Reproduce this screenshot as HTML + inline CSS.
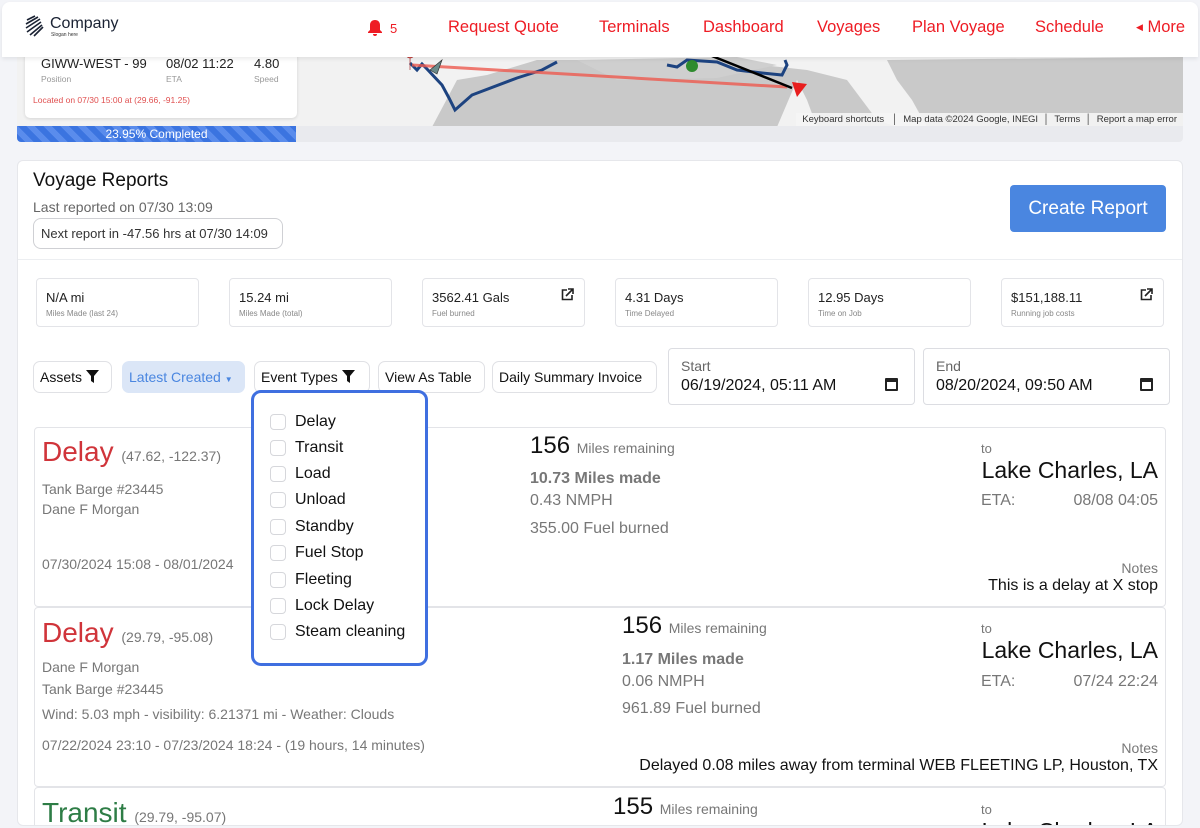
<!DOCTYPE html>
<html style="overflow:hidden"><head><meta charset="utf-8"><style>
*{box-sizing:border-box;margin:0;padding:0}
html,body{width:1200px;height:828px;overflow:hidden}
body{background:#f3f4f8;font-family:"Liberation Sans",Arial,sans-serif;position:relative;color:#222}
.a{position:absolute;white-space:nowrap}
.nav{color:#ee1c24;font-size:16.5px;top:18px}
.stat{position:absolute;top:278px;width:163px;height:49px;border:1px solid #e3e4e8;border-radius:4px;background:#fff}
.stat .v{position:absolute;left:9px;top:11px;font-size:13px;color:#222}
.stat .l{position:absolute;left:9px;top:30px;font-size:8px;color:#888}
.btn{position:absolute;top:361px;height:32px;border:1px solid #e0e1e5;border-radius:7px;background:#fff;font-size:14px;line-height:30px;padding-left:6px;color:#111}
.date{position:absolute;top:348px;height:57px;border:1px solid #dcdde2;border-radius:4px;background:#fff}
.date .l{position:absolute;left:12px;top:9px;font-size:14px;color:#666}
.date .v{position:absolute;left:12px;top:28px;font-size:16px;color:#111}
.cal{position:absolute;right:16px;top:29px;width:13px;height:13px;border:2px solid #222;border-top-width:4px;border-radius:1px}
.row{position:absolute;left:34px;width:1132px;border:1px solid #e3e4e8;border-radius:4px;background:#fff}
.g{color:#777}
.cb{position:absolute;left:270px;width:16px;height:16px;border:1px solid #d6d7db;border-radius:4px;background:#fff}
.it{position:absolute;left:295px;font-size:16px;color:#111}
</style></head><body>

<!-- map -->
<div class="a" style="left:17px;top:40px;width:1166px;height:87px;background:#f2f2f2;overflow:hidden">
<svg width="1166" height="87" viewBox="0 0 1166 87">
<polygon points="415,87 440,40 470,35 520,20 700,20 790,30 830,40 860,80 880,87" fill="#c9c9c9"/>
<polygon points="560,20 720,17 760,25 700,38 600,40" fill="#cfcfcf"/>
<polygon points="870,20 1166,17 1166,87 910,87 895,60 880,40" fill="#c9c9c9"/>
<polygon points="780,40 790,60 800,87 760,87" fill="#f2f2f2"/>
<polyline points="393,23 400,30 405,24 410,29 425,45 432,58 438,70 455,55 500,38 525,30 540,22" fill="none" stroke="#1d4380" stroke-width="3"/>
<polyline points="650,25 660,27 670,20 700,22 720,30 745,33 765,35 770,25 768,20" fill="none" stroke="#1d4380" stroke-width="3"/>
<line x1="395" y1="25" x2="770" y2="47" stroke="#ee5a4f" stroke-width="3" opacity=".8"/>
<line x1="680" y1="10" x2="775" y2="48" stroke="#000" stroke-width="2.5"/>
<circle cx="675" cy="26" r="6" fill="#2e8b2e"/>
<polygon points="775,42 790,44 780,57" fill="#e81e1e"/>
<polygon points="413,30 425,20 420,34" fill="#6a8a8a" stroke="#333" stroke-width=".7"/>
<path d="M393 18a4 4 0 1 1 0.1 0L393 30Z" fill="#e05a4f" stroke="#a33" stroke-width=".7"/>
</svg>
<div class="a" style="right:0;bottom:0;height:14px;background:rgba(245,245,245,.9);font-size:9.5px;line-height:14px;color:#333;padding:0 6px">Keyboard shortcuts &nbsp;&nbsp;│&nbsp; Map data ©2024 Google, INEGI &nbsp;│&nbsp; Terms &nbsp;│&nbsp; Report a map error</div>
</div>
<div class="a" style="left:25px;top:45px;width:272px;height:73px;background:#fff;border-radius:5px;box-shadow:0 1px 3px rgba(0,0,0,.12)">
<div class="a" style="left:16px;top:11px;font-size:13px">GIWW-WEST - 99</div>
<div class="a" style="left:141px;top:11px;font-size:13px">08/02 11:22</div>
<div class="a" style="left:229px;top:11px;font-size:13px">4.80</div>
<div class="a" style="left:16px;top:29px;font-size:8.5px;color:#999">Position</div>
<div class="a" style="left:141px;top:29px;font-size:8.5px;color:#999">ETA</div>
<div class="a" style="left:229px;top:29px;font-size:8.5px;color:#999">Speed</div>
<div class="a" style="left:8px;top:50px;font-size:8.5px;color:#e05050">Located on 07/30 15:00 at (29.66, -91.25)</div>
</div>
<!-- progress -->
<div class="a" style="left:17px;top:126px;width:1166px;height:16px;background:#e9eaee;border-radius:0 0 4px 4px"></div>
<div class="a" style="left:17px;top:126px;width:279px;height:16px;background:repeating-linear-gradient(45deg,#3b74e0 0 6px,#5a8cec 6px 12px);border-radius:0 0 0 4px;color:#fff;font-size:12px;line-height:16px;text-align:center">23.95% Completed</div>

<!-- header -->
<div class="a" style="left:2px;top:2px;width:1196px;height:55px;background:#fff;border-radius:8px 8px 0 0;box-shadow:0 2px 4px rgba(0,0,0,.08)"></div>
<svg class="a" style="left:24px;top:14px" width="22" height="24" viewBox="0 0 22 24"><g fill="none" stroke="#1a2233" stroke-width="1.6"><path d="M3 6l8-4M2 10l12-7M2 14l14-9M3 18l14-10M6 21l12-10M10 22l9-9"/></g></svg>
<div class="a" style="left:50px;top:15px;font-size:16px;color:#1a2233">Company</div>
<div class="a" style="left:51px;top:32px;font-size:5px;color:#333">Slogan here</div>
<svg class="a" style="left:367px;top:19px" width="16" height="17" viewBox="0 0 16 17"><path d="M8 1c3 0 5 2 5 5v5l2 2v1H1v-1l2-2V6c0-3 2-5 5-5zM6 15h4a2 2 0 0 1-4 0z" fill="#ee1c24"/></svg>
<div class="a" style="left:390px;top:21px;font-size:13px;color:#ee1c24">5</div>
<div class="a nav" style="left:448px">Request Quote</div>
<div class="a nav" style="left:599px">Terminals</div>
<div class="a nav" style="left:703px">Dashboard</div>
<div class="a nav" style="left:817px">Voyages</div>
<div class="a nav" style="left:912px">Plan Voyage</div>
<div class="a nav" style="left:1035px">Schedule</div>
<div class="a nav" style="left:1136px"><span style="font-size:9px;position:relative;top:-2px">◀</span>&nbsp;More</div>

<!-- main card -->
<div class="a" style="left:17px;top:160px;width:1166px;height:666px;background:#fff;border:1px solid #e6e7eb;border-radius:6px;overflow:hidden">
<div class="a" style="left:0;top:98px;width:1164px;height:1px;background:#eceef1"></div>
<div class="row" style="left:16px;top:266px;height:180px"></div>
<div class="row" style="left:16px;top:446px;height:180px"></div>
<div class="row" style="left:16px;top:626px;height:60px"></div>
<div class="a" style="left:24px;top:636px;font-size:28px;color:#2e7d46">Transit <span style="font-size:14px;color:#777">(29.79, -95.07)</span></div>
<div class="a" style="left:595px;top:632px;font-size:24px;color:#111">155 <span style="font-size:14px;color:#777">Miles remaining</span></div>
<div class="a g" style="left:963px;top:641px;font-size:13px">to</div>
<div class="a" style="right:24px;top:657px;font-size:23px;color:#111">Lake Charles, LA</div>
</div>
<div class="a" style="left:33px;top:170px;font-size:19px;color:#111">Voyage Reports</div>
<div class="a" style="left:33px;top:199px;font-size:14px;color:#666">Last reported on 07/30 13:09</div>
<div class="a" style="left:33px;top:218px;width:250px;height:31px;border:1px solid #cfd0d4;border-radius:8px;font-size:13px;line-height:29px;padding-left:7px;color:#333">Next report in -47.56 hrs at 07/30 14:09</div>
<div class="a" style="left:1010px;top:185px;width:156px;height:47px;background:#4a86e0;border-radius:4px;color:#fff;font-size:19px;line-height:47px;text-align:center">Create Report</div>

<div class="stat" style="left:36px"><div class="v">N/A mi</div><div class="l">Miles Made (last 24)</div></div>
<div class="stat" style="left:229px"><div class="v">15.24 mi</div><div class="l">Miles Made (total)</div></div>
<div class="stat" style="left:422px"><div class="v">3562.41 Gals</div><div class="l">Fuel burned</div><svg class="a" style="right:10px;top:9px" width="13" height="13" viewBox="0 0 13 13"><path d="M6 2H1.5v9.5H11V7" fill="none" stroke="#222" stroke-width="1.6"/><path d="M7 1h5v5M12 1L5 8" fill="none" stroke="#222" stroke-width="1.6"/></svg></div>
<div class="stat" style="left:615px"><div class="v">4.31 Days</div><div class="l">Time Delayed</div></div>
<div class="stat" style="left:808px"><div class="v">12.95 Days</div><div class="l">Time on Job</div></div>
<div class="stat" style="left:1001px"><div class="v">$151,188.11</div><div class="l">Running job costs</div><svg class="a" style="right:10px;top:9px" width="13" height="13" viewBox="0 0 13 13"><path d="M6 2H1.5v9.5H11V7" fill="none" stroke="#222" stroke-width="1.6"/><path d="M7 1h5v5M12 1L5 8" fill="none" stroke="#222" stroke-width="1.6"/></svg></div>

<div class="btn" style="left:33px;width:79px">Assets <svg width="13" height="13" viewBox="0 0 13 13" style="vertical-align:-1px"><path d="M0 0h13L8 6v7L5 11V6z" fill="#111"/></svg></div>
<div class="btn" style="left:122px;width:123px;background:#dbe6f7;border-color:#dbe6f7;color:#4a86e0">Latest Created <span style="font-size:8px">▼</span></div>
<div class="btn" style="left:254px;width:116px">Event Types <svg width="13" height="13" viewBox="0 0 13 13" style="vertical-align:-1px"><path d="M0 0h13L8 6v7L5 11V6z" fill="#111"/></svg></div>
<div class="btn" style="left:378px;width:107px">View As Table</div>
<div class="btn" style="left:492px;width:165px">Daily Summary Invoice</div>
<div class="date" style="left:668px;width:247px"><div class="l">Start</div><div class="v">06/19/2024, 05:11 AM</div><div class="cal"></div></div>
<div class="date" style="left:923px;width:247px"><div class="l">End</div><div class="v">08/20/2024, 09:50 AM</div><div class="cal"></div></div>

<div class="a" style="left:42px;top:436px;font-size:28px;color:#d0343a">Delay <span style="font-size:14px;color:#777">(47.62, -122.37)</span></div>
<div class="a g" style="left:42px;top:481px;font-size:14px">Tank Barge #23445</div>
<div class="a g" style="left:42px;top:501px;font-size:14px">Dane F Morgan</div>
<div class="a g" style="left:42px;top:556px;font-size:14px">07/30/2024 15:08 - 08/01/2024</div>
<div class="a" style="left:530px;top:432px;font-size:24px;color:#111">156 <span style="font-size:14px;color:#777">Miles remaining</span></div>
<div class="a g" style="left:530px;top:470px;font-size:16px;font-weight:bold">10.73 Miles made</div>
<div class="a g" style="left:530px;top:492px;font-size:16px">0.43 NMPH</div>
<div class="a g" style="left:530px;top:520px;font-size:16px">355.00 Fuel burned</div>
<div class="a g" style="left:981px;top:441px;font-size:13px">to</div>
<div class="a" style="right:42px;top:457px;font-size:23px;color:#111">Lake Charles, LA</div>
<div class="a g" style="left:981px;top:492px;font-size:16px">ETA:</div>
<div class="a g" style="right:42px;top:492px;font-size:16px">08/08 04:05</div>
<div class="a g" style="right:42px;top:560px;font-size:14px">Notes</div>
<div class="a" style="right:42px;top:577px;font-size:16px;color:#111">This is a delay at X stop</div>

<div class="a" style="left:42px;top:617px;font-size:28px;color:#d0343a">Delay <span style="font-size:14px;color:#777">(29.79, -95.08)</span></div>
<div class="a g" style="left:42px;top:659px;font-size:14px">Dane F Morgan</div>
<div class="a g" style="left:42px;top:681px;font-size:14px">Tank Barge #23445</div>
<div class="a g" style="left:42px;top:706px;font-size:14px">Wind: 5.03 mph - visibility: 6.21371 mi - Weather: Clouds</div>
<div class="a g" style="left:42px;top:737px;font-size:14px">07/22/2024 23:10 - 07/23/2024 18:24 - (19 hours, 14 minutes)</div>
<div class="a" style="left:622px;top:612px;font-size:24px;color:#111">156 <span style="font-size:14px;color:#777">Miles remaining</span></div>
<div class="a g" style="left:622px;top:651px;font-size:16px;font-weight:bold">1.17 Miles made</div>
<div class="a g" style="left:622px;top:673px;font-size:16px">0.06 NMPH</div>
<div class="a g" style="left:622px;top:700px;font-size:16px">961.89 Fuel burned</div>
<div class="a g" style="left:981px;top:621px;font-size:13px">to</div>
<div class="a" style="right:42px;top:637px;font-size:23px;color:#111">Lake Charles, LA</div>
<div class="a g" style="left:981px;top:673px;font-size:16px">ETA:</div>
<div class="a g" style="right:42px;top:673px;font-size:16px">07/24 22:24</div>
<div class="a g" style="right:42px;top:740px;font-size:14px">Notes</div>
<div class="a" style="right:42px;top:757px;font-size:16px;color:#111">Delayed 0.08 miles away from terminal WEB FLEETING LP, Houston, TX</div>

<!-- dropdown -->
<div class="a" style="left:251px;top:390px;width:177px;height:276px;background:#fff;border:3px solid #3f6fe0;border-radius:10px"></div>
<div class="cb" style="top:414px"></div><div class="it" style="top:413px">Delay</div>
<div class="cb" style="top:440px"></div><div class="it" style="top:439px">Transit</div>
<div class="cb" style="top:466px"></div><div class="it" style="top:465px">Load</div>
<div class="cb" style="top:492px"></div><div class="it" style="top:491px">Unload</div>
<div class="cb" style="top:519px"></div><div class="it" style="top:518px">Standby</div>
<div class="cb" style="top:545px"></div><div class="it" style="top:544px">Fuel Stop</div>
<div class="cb" style="top:572px"></div><div class="it" style="top:571px">Fleeting</div>
<div class="cb" style="top:598px"></div><div class="it" style="top:597px">Lock Delay</div>
<div class="cb" style="top:624px"></div><div class="it" style="top:623px">Steam cleaning</div>
</body></html>
